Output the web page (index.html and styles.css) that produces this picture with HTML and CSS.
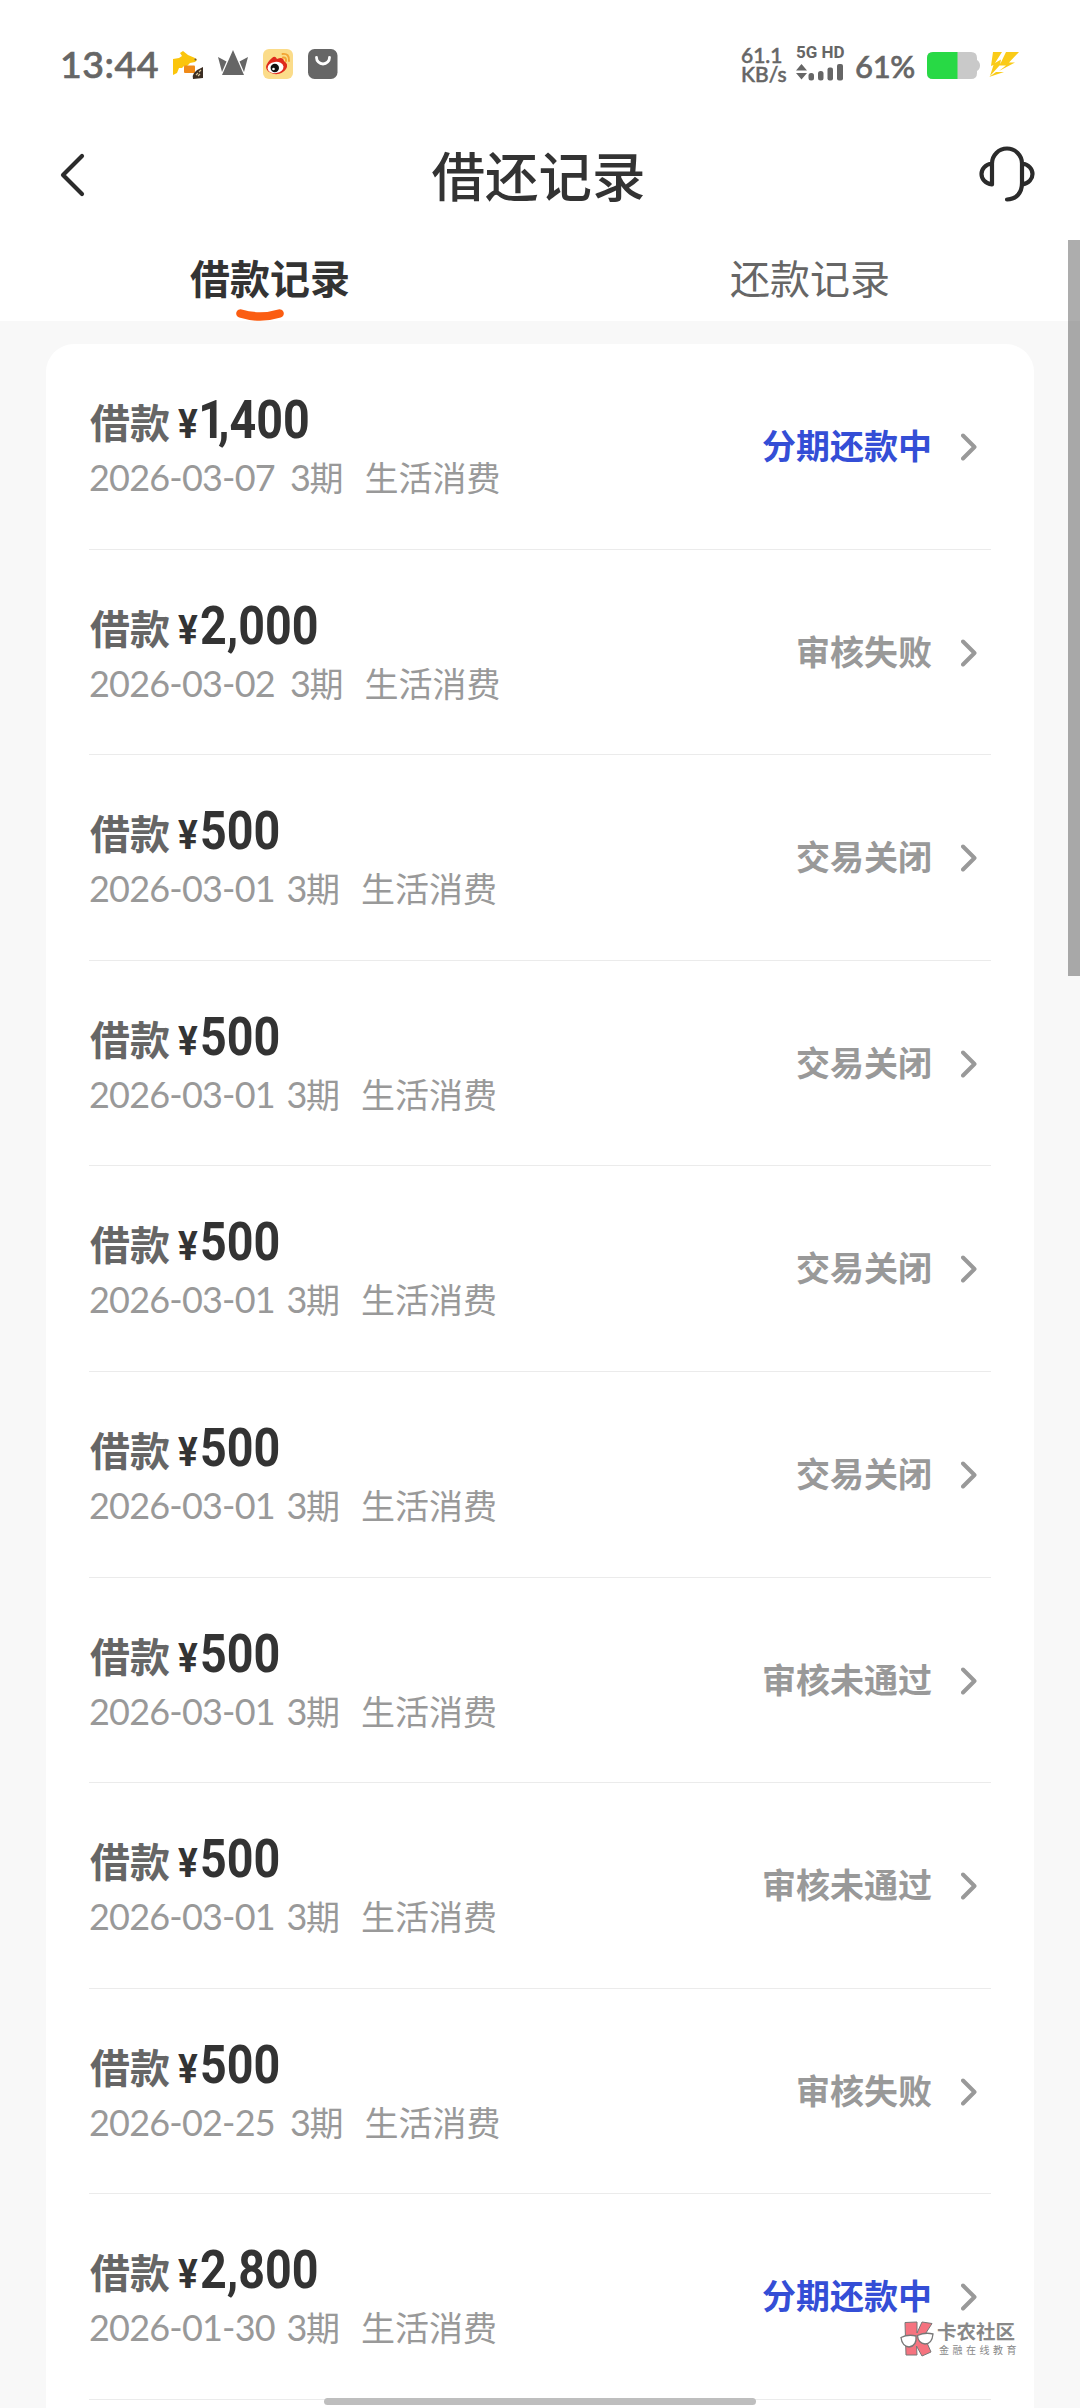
FILE: index.html
```html
<!DOCTYPE html>
<html lang="zh-CN">
<head>
<meta charset="utf-8">
<title>借还记录</title>
<link rel="stylesheet" href="styles.css">
</head>
<body>
<svg class="defs" width="0" height="0">
  <symbol id="chev" viewBox="0 0 16 28"><path d="M2 2.500 L13.500 14 L2 25.500" fill="none" stroke="#999" stroke-width="4" stroke-linecap="round" stroke-linejoin="round"/></symbol>
</svg>
<div class="screen">
  <div class="statusbar">
    <div class="sb-left">
      <span class="clock">13:44</span>
      <svg class="app" viewBox="0 0 30 30"><path d="M0 10 L6 9 L9 7 L7 4 L10 2 L15 6 L22 9 L24 11 L22 13 L17 14 L14 17 L11 17 L9 19 L6 19 L4 24 L0 26Z" fill="#fbc50c"/><rect x="11" y="16.500" width="11" height="7.500" rx="1" fill="#f08a18"/><circle cx="22.500" cy="10.500" r="1" fill="#654"/><path d="M30 18 L30 29 L20 30 Q18 23 30 18Z" fill="#3b2d22"/><path d="M23 26 l2 -2 M26 23 l2 -2 M25 27 l2 -2" stroke="#d7c49a" stroke-width="1.200"/></svg>
      <svg class="app" viewBox="0 0 30 30"><path d="M15 1 L26 26 H4Z M0 8 L8.500 12.500 L4 23Z M30 8 L21.500 12.500 L26 23Z" fill="#666"/></svg>
      <svg class="app" viewBox="0 0 30 30"><rect width="30" height="30" rx="6" fill="#fbdc8a"/><path d="M9 9 Q12 6 14 10 Q20 7 21 12 Q26 15 23 20 Q19 26 11 25 Q3 23 3 18 Q4 13 9 9Z" fill="#df2a1d"/><ellipse cx="12.500" cy="18.500" rx="8" ry="5.600" fill="#fff" transform="rotate(-8 12.500 18.500)"/><circle cx="11.800" cy="19" r="4.200" fill="#111"/><circle cx="10.500" cy="20" r="1.300" fill="#fff"/><path d="M19.500 5 Q26.500 4 26 12 M20 8.500 Q23.500 8 23 12" fill="none" stroke="#f2a535" stroke-width="1.900" stroke-linecap="round"/></svg>
      <svg class="app" viewBox="0 0 30 30"><rect width="29.500" height="30" rx="6.500" fill="#666"/><path d="M8.500 8.500 A6.500 6.500 0 0 0 21.500 8.500" fill="none" stroke="#fff" stroke-width="2.800" stroke-linecap="round"/></svg>
    </div>
    <div class="sb-right">
      <div class="speed"><span>61.1</span><span>KB/s</span></div>
      <div class="net"><span>5G HD</span>
        <svg width="48" height="17" viewBox="0 0 48 17"><g fill="#666"><path d="M5.500 0 L11 6.500 H0Z M5.500 15.500 L11 9 H0Z"/><rect x="12.500" y="9" width="5.500" height="7.500" rx="2.500"/><rect x="22" y="7" width="5.500" height="9.500" rx="2.500"/><rect x="31.500" y="3.500" width="5.500" height="13" rx="2"/><rect x="41" y="0" width="6" height="16.500" rx="2"/></g></svg>
      </div>
      <span class="pct">61%</span>
      <svg class="battery" width="54" height="27" viewBox="0 0 54 27"><path d="M6 0 H44 Q50 0 50 6 V8 Q53 10 53 13.500 Q53 17 50 19 V21 Q50 27 44 27 H6 Q0 27 0 21 V6 Q0 0 6 0Z" fill="#c9c9c9"/><path d="M30.500 0 H6 Q0 0 0 6 V21 Q0 27 6 27 H30.500Z" fill="#28d945"/></svg>
      <svg class="bolt" width="30" height="25" viewBox="0 0 30 25"><path d="M4 0 H13 L6 11 L12 7.500 L11 13 L1 24 L4.500 13 L2 14Z M17 0 H30 L20 10.500 H26 L10 19 L17 13.500 H10.500Z M0 25 L7 20 L15 20Z" fill="#facb18"/></svg>
    </div>
  </div>

  <header class="nav">
    <svg class="back" width="25" height="46" viewBox="0 0 25 46"><path d="M22 4 L3 23 L22 42" fill="none" stroke="#2b2b2b" stroke-width="4.200" stroke-linecap="round" stroke-linejoin="round"/></svg>
    <h1>借还记录</h1>
    <svg class="service" width="56" height="58" viewBox="0 0 56 58"><path d="M13 39.500 V18.500 A15 15 0 0 1 43 18.500 V38 C43 48 37 54.500 28 54.500 M13 18.500 C-1 20.500 -1 37.500 13 39.500 M43 18.500 C57 20.500 57 37.500 43 39.500" fill="none" stroke="#2b2b2b" stroke-width="4.200" stroke-linecap="round" stroke-linejoin="round"/></svg>
  </header>

  <nav class="tabs">
    <div class="tab active">借款记录
      <svg class="mark" width="48" height="14" viewBox="0 0 48 14"><path d="M4.500 4.500 Q24 10.500 43.500 4.500" fill="none" stroke="#fb5d12" stroke-width="8.600" stroke-linecap="round"/></svg>
    </div>
    <div class="tab">还款记录</div>
  </nav>

  <main class="list">
    <div class="card">
      <div class="row"><div class="info"><div class="amount"><span class="kind">借款</span><span class="yen">¥</span><span class="num"><i class="one">1</i>,400</span></div><div class="meta"><span class="date">2026-03-07</span><span class="term">3<b>期</b></span><span class="use">生活消费</span></div></div><div class="state going">分期还款中</div><svg class="chev"><use href="#chev"/></svg></div>
      <div class="row"><div class="info"><div class="amount"><span class="kind">借款</span><span class="yen">¥</span><span class="num">2,000</span></div><div class="meta"><span class="date">2026-03-02</span><span class="term">3<b>期</b></span><span class="use">生活消费</span></div></div><div class="state">审核失败</div><svg class="chev"><use href="#chev"/></svg></div>
      <div class="row"><div class="info"><div class="amount"><span class="kind">借款</span><span class="yen">¥</span><span class="num">500</span></div><div class="meta"><span class="date slim">2026-03-01</span><span class="term">3<b>期</b></span><span class="use">生活消费</span></div></div><div class="state">交易关闭</div><svg class="chev"><use href="#chev"/></svg></div>
      <div class="row"><div class="info"><div class="amount"><span class="kind">借款</span><span class="yen">¥</span><span class="num">500</span></div><div class="meta"><span class="date slim">2026-03-01</span><span class="term">3<b>期</b></span><span class="use">生活消费</span></div></div><div class="state">交易关闭</div><svg class="chev"><use href="#chev"/></svg></div>
      <div class="row"><div class="info"><div class="amount"><span class="kind">借款</span><span class="yen">¥</span><span class="num">500</span></div><div class="meta"><span class="date slim">2026-03-01</span><span class="term">3<b>期</b></span><span class="use">生活消费</span></div></div><div class="state">交易关闭</div><svg class="chev"><use href="#chev"/></svg></div>
      <div class="row"><div class="info"><div class="amount"><span class="kind">借款</span><span class="yen">¥</span><span class="num">500</span></div><div class="meta"><span class="date slim">2026-03-01</span><span class="term">3<b>期</b></span><span class="use">生活消费</span></div></div><div class="state">交易关闭</div><svg class="chev"><use href="#chev"/></svg></div>
      <div class="row"><div class="info"><div class="amount"><span class="kind">借款</span><span class="yen">¥</span><span class="num">500</span></div><div class="meta"><span class="date slim">2026-03-01</span><span class="term">3<b>期</b></span><span class="use">生活消费</span></div></div><div class="state">审核未通过</div><svg class="chev"><use href="#chev"/></svg></div>
      <div class="row"><div class="info"><div class="amount"><span class="kind">借款</span><span class="yen">¥</span><span class="num">500</span></div><div class="meta"><span class="date slim">2026-03-01</span><span class="term">3<b>期</b></span><span class="use">生活消费</span></div></div><div class="state">审核未通过</div><svg class="chev"><use href="#chev"/></svg></div>
      <div class="row"><div class="info"><div class="amount"><span class="kind">借款</span><span class="yen">¥</span><span class="num">500</span></div><div class="meta"><span class="date">2026-02-25</span><span class="term">3<b>期</b></span><span class="use">生活消费</span></div></div><div class="state">审核失败</div><svg class="chev"><use href="#chev"/></svg></div>
      <div class="row"><div class="info"><div class="amount"><span class="kind">借款</span><span class="yen">¥</span><span class="num">2,800</span></div><div class="meta"><span class="date slim">2026-01-30</span><span class="term">3<b>期</b></span><span class="use">生活消费</span></div></div><div class="state going">分期还款中</div><svg class="chev"><use href="#chev"/></svg></div>
    </div>
  </main>

  <div class="scrollbar"></div>
  <div class="watermark">
    <svg width="34" height="36" viewBox="0 0 34 36"><path d="M5 1.500 L17 1 V12 L22 1 L32 2.500 L24 15 L31 31 L22 35 L16.500 25 L17 34 L6 34Z" fill="#f5737f" stroke="#777" stroke-width="1"/><path d="M1 16.500 Q8 13 16 15 Q17 25 9 26 Q2 25 1 16.500Z M17.500 14.500 Q25 11 33 13 Q32 23 25 23 Q18 22 17.500 14.500Z" fill="#fff" stroke="#777" stroke-width="1.300"/></svg>
    <div class="wm-text"><span class="wm-name">卡农社区</span><span class="wm-sub">金融在线教育</span></div>
  </div>
  <div class="homebar"></div>
</div>
</body>
</html>
```
FILE: styles.css
```css
* { box-sizing: border-box; }
body { margin: 0; background: #f8f8f8; font-family: "Noto Sans CJK SC", sans-serif; }
.defs { position: absolute; }
.screen { position: relative; width: 1080px; height: 2408px; overflow: hidden; background: #f8f8f8; }

.statusbar { height: 120px; padding: 0 61px 0 60px; background: #fff; display: flex; justify-content: space-between; font-family: Lato, sans-serif; color: #666; }
.sb-left { display: flex; align-items: flex-start; padding-top: 49px; }
.clock { width: 113px; font-size: 37.5px; line-height: 29px; font-weight: 500; -webkit-text-stroke: 0.7px #666; letter-spacing: 0.5px; }
.app { width: 30px; height: 30px; margin-right: 15px; }
.sb-right { display: flex; align-items: flex-start; padding-top: 45px; }
.speed { width: 56px; padding-left: 1px; display: flex; flex-direction: column; font-size: 21px; line-height: 19px; font-weight: 500; -webkit-text-stroke: 0.5px #666; white-space: nowrap; }
.net { width: 59px; font-family: Roboto, sans-serif; font-size: 17px; line-height: 17px; font-weight: 700; }
.net span { display: block; height: 17px; line-height: 15px; }
.net svg { display: block; margin-top: 2px; }
.pct { width: 72px; font-size: 31px; line-height: 43px; font-weight: 500; -webkit-text-stroke: 0.6px #666; letter-spacing: -0.3px; white-space: nowrap; }
.battery { margin-top: 7px; }
.bolt { margin: 7px 0 0 8px; }

.nav { height: 124px; padding: 0 44px 0 60px; background: #fff; display: flex; justify-content: space-between; align-items: flex-start; }
.back { margin-top: 32px; }
.nav h1 { margin: 14px 0 0 13px; font-size: 53.5px; line-height: 80px; font-weight: 500; color: #333; }
.service { margin: 25px 1px 0 0; }

.tabs { height: 77px; background: #fff; display: grid; grid-template-columns: 1fr 1fr; }
.tab { position: relative; text-align: center; font-size: 40px; line-height: 67px; color: #666; }
.tab.active { color: #333; font-weight: 700; }
.mark { position: absolute; left: 236px; top: 65px; }

.list { padding: 23px 46px 0; }
.card { height: 2100px; padding: 0 43px; background: #fff; border-radius: 28px 28px 0 0; }
.row { height: 205.6px; border-bottom: 1.5px solid #ebebeb; display: flex; align-items: flex-start; }
.info { flex: 1; padding-top: 44px; }
.amount { height: 64px; line-height: 64px; padding-left: 1px; display: flex; align-items: baseline; white-space: nowrap; }
.kind { width: 88px; font-size: 40px; font-weight: 700; color: #666; }
.yen { width: 22px; font: 700 41px/64px Roboto, sans-serif; color: #333; transform: scaleX(0.9); transform-origin: left; }
.num { font: 700 53px/64px Roboto, sans-serif; color: #333; transform: scaleX(0.88); transform-origin: left; }
.one { font-style: normal; margin: 0 -8px 0 -2px; }
.meta { height: 50px; line-height: 50px; display: flex; align-items: baseline; font-size: 34px; color: #999; white-space: nowrap; }
.date { width: 201px; font-family: Lato, sans-serif; font-size: 36px; letter-spacing: -0.8px; }
.date.slim { width: 197.5px; }
.term { width: 74.5px; font-family: Lato, "Noto Sans CJK SC", sans-serif; font-size: 36px; letter-spacing: -1.5px; }
.term b { font-weight: 400; font-size: 34px; font-family: "Noto Sans CJK SC", sans-serif; }
.state { padding-top: 76px; font-size: 34px; line-height: 50px; font-weight: 700; color: #999; }
.state.going { color: #344ed6; }
.chev { width: 16px; height: 28px; margin: 89px 14px 0 29px; }

.scrollbar { position: absolute; left: 1068px; top: 240px; width: 12px; height: 736px; background: rgba(0, 0, 0, 0.32); }
.watermark { position: absolute; left: 900px; top: 2321px; display: flex; gap: 3px; }
.wm-text { display: flex; flex-direction: column; white-space: nowrap; color: #888; }
.wm-name { font-size: 19.5px; line-height: 20px; font-weight: 700; }
.wm-sub { margin: 3px 0 0 2px; font-size: 10px; line-height: 12px; letter-spacing: 3.5px; }
.homebar { position: absolute; left: 324px; top: 2398px; width: 432px; height: 7px; border-radius: 4px; background: #bebebe; }
```
